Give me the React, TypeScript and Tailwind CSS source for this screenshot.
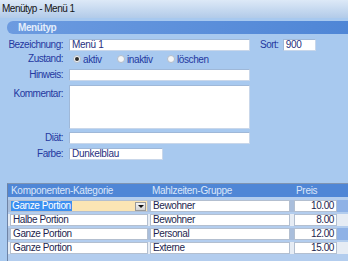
import { ReactNode } from "react";

const font = { fontFamily: '"Liberation Sans", Arial, sans-serif' };

const Field = ({ label, children, h = "h-[12px]", mt, top = false }: { label: string; children: ReactNode; h?: string; mt: string; top?: boolean }) => (
  <div className={`flex ${mt} ${h}`}>
    <div className={`w-[63px] shrink-0 text-right text-[10px] tracking-[-0.5px] text-[#2438a0] leading-[12px] ${top ? "pt-[3px]" : ""}`}>
      {label}
    </div>
    <div className="ml-[6px] flex items-center">{children}</div>
  </div>
);

const Input = ({ w, h = "h-[12px]", value = "" }: { w: string; h?: string; value?: string }) => (
  <div className={`${w} ${h} bg-white border border-[#9fb8d8] border-r-[#c9d7ea] border-b-[#c9d7ea] px-[2px] text-[10px] leading-[10px] tracking-[-0.3px] text-[#27307e]`}>
    {value}
  </div>
);

const Radio = ({ label, checked, w }: { label: string; checked?: boolean; w: string }) => (
  <div className={`${w} flex items-center gap-[2px] text-[10px] tracking-[-0.4px] text-[#2438a0]`}>
    <span className="w-[8px] h-[8px] rounded-full bg-[#f4f6f8] border border-[#b3bcc8] flex items-center justify-center">
      {checked && <span className="w-[4px] h-[4px] rounded-full bg-[#2c2c2c]" />}
    </span>
    {label}
  </div>
);

const rows = [
  { kat: "Ganze Portion", gruppe: "Bewohner", preis: "10.00" },
  { kat: "Halbe Portion", gruppe: "Bewohner", preis: "8.00" },
  { kat: "Ganze Portion", gruppe: "Personal", preis: "12.00" },
  { kat: "Ganze Portion", gruppe: "Externe", preis: "15.00" },
];

const cell = "h-[12px] bg-white border border-[#b3bfd0] px-[2px] text-[10px] leading-[10px] tracking-[-0.4px] text-[#1d1f4f]";

export default function App() {
  return (
    <div className="w-[348px] h-[261px] overflow-hidden bg-[#a8c9ef] flex flex-col" style={font}>
      <div className="h-[18px] shrink-0 bg-gradient-to-b from-[#dde9f7] to-[#b2cbe9] pl-[2px] text-[10px] tracking-[-0.5px] leading-[17px] text-[#151515]">
        Menütyp - Menü 1
      </div>

      <div className="mt-[3px] ml-[7px] h-[13px] rounded-l-[6px] bg-gradient-to-r from-[#6c9be0] to-[#4f86d6] pl-[11px] text-[10px] font-bold tracking-[-0.4px] leading-[13px] text-[#e3edfb]">
        Menütyp
      </div>

      <div className="flex mt-[5px] h-[12px]">
        <Field label="Bezeichnung:" mt="mt-0">
          <Input w="w-[181px]" value="Menü 1" />
        </Field>
        <span className="ml-[10px] text-[10px] tracking-[-0.5px] text-[#2438a0] leading-[12px]">Sort:</span>
        <div className="ml-[4px]">
          <Input w="w-[33px]" value="900" />
        </div>
      </div>

      <Field label="Zustand:" mt="mt-[2px]">
        <div className="flex items-center pl-[4px]">
          <Radio w="w-[44px]" label="aktiv" checked />
          <Radio w="w-[50px]" label="inaktiv" />
          <Radio w="w-[50px]" label="löschen" />
        </div>
      </Field>

      <Field label="Hinweis:" mt="mt-[4px]">
        <Input w="w-[181px]" />
      </Field>

      <Field label="Kommentar:" mt="mt-[4px]" h="h-[44px]" top>
        <div className="self-start"><Input w="w-[181px]" h="h-[44px]" /></div>
      </Field>

      <Field label="Diät:" mt="mt-[3px]">
        <Input w="w-[181px]" />
      </Field>

      <Field label="Farbe:" mt="mt-[4px]">
        <Input w="w-[94px]" value="Dunkelblau" />
      </Field>

      <div className="mt-[23px] ml-[7px] flex-1 border-l border-t border-l-[#6e83a5] border-t-[#7f94b2] bg-[#b3cdee] flex flex-col">
        <div className="h-[13px] shrink-0 bg-[#4f86d6] flex text-[10px] tracking-[-0.3px] leading-[13px] text-[#dbe7fa]">
          <span className="w-[143px] pl-[3px]">Komponenten-Kategorie</span>
          <span className="w-[143px] pl-[1px]">Mahlzeiten-Gruppe</span>
          <span className="pl-[2px]">Preis</span>
        </div>
        <div className="flex flex-col gap-[2px] pt-[3px]">
          {rows.map((r, i) => (
            <div key={i} className={`flex pl-[2px] ${i % 2 === 0 ? "bg-[#a9bedc]" : "bg-[#e6ecf4]"}`}>
              {i === 0 ? (
                <div className="w-[138px] h-[12px] bg-[#fbe5b4] border border-[#b3bfd0] flex items-center">
                  <span className="bg-[#3b8ff0] text-white text-[10px] leading-[10px] tracking-[-0.4px] pl-[1px] pr-[1px]">Ganze Portion</span>
                  <span className="ml-auto mr-[1px] w-[11px] h-[9px] bg-gradient-to-b from-[#f4f4f4] to-[#d4d4d4] border border-[#9a9a9a] flex items-center justify-center">
                    <span className="w-0 h-0 border-l-[3px] border-r-[3px] border-t-[3px] border-l-transparent border-r-transparent border-t-[#111]" />
                  </span>
                </div>
              ) : (
                <div className={`w-[138px] ${cell}`}>{r.kat}</div>
              )}
              <div className={`ml-[2px] w-[140px] ${cell}`}>{r.gruppe}</div>
              <div className="w-[4px]" />
              <div className={`w-[43px] text-right ${cell}`}>{r.preis}</div>
              <div className={`flex-1 ${i % 2 === 0 ? "bg-[#8fb2e6]" : "bg-[#e6ecf4]"}`} />
            </div>
          ))}
        </div>
      </div>
    </div>
  );
}
